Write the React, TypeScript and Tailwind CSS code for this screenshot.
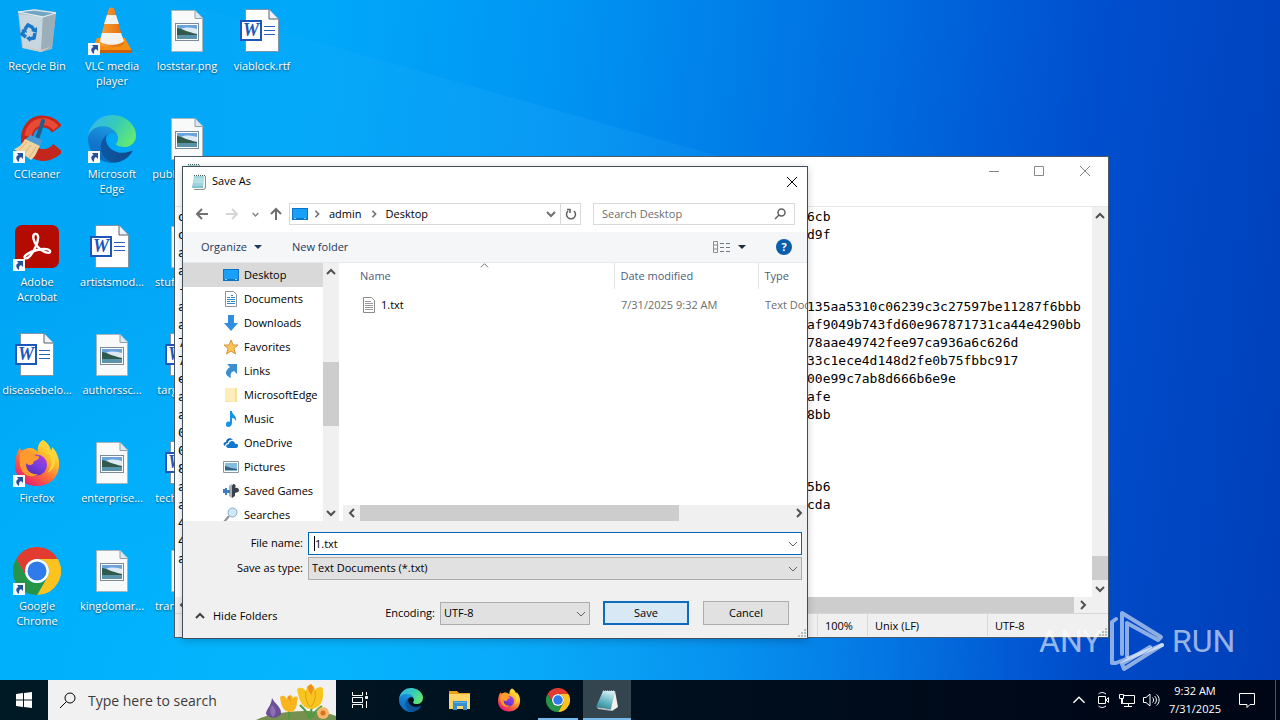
import type { ReactNode } from 'react';

type IconProps = { className?: string };

function ChromeIcon({ className }: IconProps) {
  return (
    <svg viewBox="0 0 48 48" className={className} aria-hidden="true">
      <path fill="#e23c30" d="M24 12H44.8A24 24 0 0 0 3.2 12L13.6 30A12 12 0 0 1 24 12Z" />
      <path fill="#fcc31e" d="M24 12H44.8A24 24 0 0 1 24 48L34.4 30A12 12 0 0 0 24 12Z" />
      <path fill="#269547" d="M3.2 12A24 24 0 0 0 24 48L34.4 30A12 12 0 0 1 13.6 30Z" />
      <circle cx="24" cy="24" r="12" fill="#fff" />
      <circle cx="24" cy="24" r="9.5" fill="#2f7bea" />
    </svg>
  );
}

function EdgeIcon({ className }: IconProps) {
  return (
    <svg viewBox="0 0 256 256" className={className} aria-hidden="true">
      <defs>
        <linearGradient id="edge-base" x1="0" y1="0" x2="1" y2="0">
          <stop offset="0" stopColor="#0c59a4" />
          <stop offset="1" stopColor="#114a8b" />
        </linearGradient>
        <linearGradient id="edge-side" x1="0.6" y1="0" x2="0.3" y2="1">
          <stop offset="0" stopColor="#1b9de2" />
          <stop offset="0.5" stopColor="#1478cf" />
          <stop offset="1" stopColor="#0669bc" />
        </linearGradient>
        <linearGradient id="edge-top" x1="0" y1="0.2" x2="1" y2="0.7">
          <stop offset="0" stopColor="#35b8ef" />
          <stop offset="0.5" stopColor="#36cbb6" />
          <stop offset="1" stopColor="#66eb6e" />
        </linearGradient>
      </defs>
      <path
        transform="translate(-4.6 -4.9)"
        fill="url(#edge-base)"
        d="M235.68 195.46a93.73 93.73 0 0 1-10.54 4.71 101.87 101.87 0 0 1-35.9 6.46c-47.32 0-88.54-32.55-88.54-74.32A31.48 31.48 0 0 1 117.13 105c-42.8 1.8-53.8 46.4-53.8 72.53 0 73.88 68.09 81.37 82.76 81.37 7.91 0 19.84-2.3 27-4.56l1.31-.44a128.34 128.34 0 0 0 66.6-52.8 4 4 0 0 0-5.32-5.64z"
      />
      <path
        fill="url(#edge-side)"
        d="M105.73 241.42A79.2 79.2 0 0 1 83 220.08a80.72 80.72 0 0 1 29.53-120c3.12-1.47 8.45-4.13 15.54-4a32.35 32.35 0 0 1 25.69 13 31.88 31.88 0 0 1 6.36 18.66c0-.21 24.46-79.6-80-79.6-43.9 0-80 41.66-80 78.21a130.15 130.15 0 0 0 12.11 56 128 128 0 0 0 156.38 67.11 75.55 75.55 0 0 1-62.78-8z"
      />
      <path
        fill="url(#edge-top)"
        d="M152.33 148.86c-.81 1-3.3 2.5-3.3 5.66 0 2.61 1.7 5.12 4.72 7.23 14.38 10 41.49 8.68 41.56 8.68a59.56 59.56 0 0 0 30.27-8.35 61.38 61.38 0 0 0 30.43-52.88c.26-22.41-8-37.31-11.34-43.91C223.46 23.84 177.72 0 128 0A128 128 0 0 0 0 126.2c.48-36.54 36.8-66.05 80-66.05 3.5 0 23.46.34 42 10.07 16.34 8.58 24.9 18.94 30.85 29.21 6.18 10.67 7.28 24.15 7.28 29.52s-2.74 13.33-7.8 19.91z"
      />
    </svg>
  );
}

function FirefoxIcon({ className }: IconProps) {
  return (
    <svg viewBox="0 0 48 48" className={className} aria-hidden="true">
      <defs>
        <linearGradient id="fx-body" x1="0.85" y1="0.05" x2="0.2" y2="0.95">
          <stop offset="0" stopColor="#fff14a" />
          <stop offset="0.3" stopColor="#ffbd2b" />
          <stop offset="0.6" stopColor="#ff7139" />
          <stop offset="1" stopColor="#e81873" />
        </linearGradient>
        <linearGradient id="fx-globe" x1="0.8" y1="0" x2="0.3" y2="1">
          <stop offset="0" stopColor="#b33be4" />
          <stop offset="0.5" stopColor="#7a3fe0" />
          <stop offset="1" stopColor="#5b2fb4" />
        </linearGradient>
      </defs>
      <path
        fill="url(#fx-body)"
        d="M30 1C35 4 37 8 38 12C39 10 39 9 39 8C44 13 47 20 46 28C45 39 36 47 24 47C11 47 2 38 2 26C2 19 4 14 7 8C7 10 8 11 9 12C11 10 14 9 17 9C20 9 23 11 25 13C24 8 26 3 30 1Z"
      />
      <circle cx="23.500" cy="26" r="10.500" fill="url(#fx-globe)" />
      <path fill="#ff9a2e" d="M8 12C13 10 19 12 23 17C27 17 27 19 24 21C21 22 20 23 20 25C17 27 15 26 13 24C12 31 18 36 25 35C18 41 8 35 7 26C6 20 7 16 8 12Z" />
      <path fill="#ffd43a" d="M30 1C29 8 37 13 38 21C39 26 37 31 34 34C45 29 43 17 39 12L38 12C37 8 35 4 30 1Z" />
    </svg>
  );
}

function NotepadIcon({ className }: IconProps) {
  return (
    <svg viewBox="0 0 16 16" className={className} aria-hidden="true">
      <path fill="#8b9288" d="M4 2H15V14L13 16H3Z" />
      <path fill="#f4f6ee" d="M4 2H14V13L13 15H2Z" />
      <path fill="#9fd6de" d="M3 2H13L12 14H1Z" />
      <path fill="#6fb6c4" d="M2 9H12L12 14H1Z" opacity="0.6" />
      <path stroke="#e4f5f7" strokeWidth="0.6" d="M3 5H12M3 7H12M2 9H12M2 11H12" />
      <path stroke="#4b5a58" strokeWidth="1" strokeDasharray="1 1" d="M3 1.500H14" />
    </svg>
  );
}

function TaskNotepadIcon() {
  return (
    <svg viewBox="0 0 24 24" className="size-6" aria-hidden="true">
      <defs>
        <linearGradient id="np-page" x1="0.7" y1="0" x2="0.3" y2="1">
          <stop offset="0" stopColor="#d8f1f4" />
          <stop offset="0.6" stopColor="#5fb3c0" />
          <stop offset="1" stopColor="#358497" />
        </linearGradient>
      </defs>
      <path fill="#f3f1ea" d="M20 3L23 19L17 23L15 20Z" />
      <path fill="#b8c0c0" d="M2 19L16 21L17 23L3 21Z" />
      <path fill="url(#np-page)" d="M8 3H20L16 21L1 19Z" />
      <path stroke="#dfe7e8" strokeDasharray="1 1" d="M8 3H20" />
    </svg>
  );
}

function RecycleBinIcon() {
  return (
    <svg viewBox="0 0 48 48" className="size-12" aria-hidden="true">
      <path fill="#a9bbc6" d="M5 5L21 2L43 5L39 42L28 45L9 41Z" />
      <path fill="#c8d7df" d="M6 7L30 10L28 45L10 41Z" />
      <path fill="#9caeb9" d="M30 10L43 6L39 41L28 45Z" />
      <path fill="#72a6c4" d="M6 5L21 3L42 6L30 9Z" />
      <path fill="none" stroke="#e8f3f8" d="M5 5L21 3L43 6L30 10Z" />
      <path fill="#d5c7bc" d="M10 39L28 43L39 39L28 45Z" />
      <g fill="none" stroke="#1878c9" strokeWidth="3.500">
        <path d="M12 22L15 18L19 20L21 23" />
        <path d="M22 26L21 31L16 32" />
        <path d="M13 30L9 27L11 24" />
      </g>
      <path fill="#1878c9" d="M18 24L24 20V26ZM17 29V35L13 31ZM8 23L13 21L14 26Z" />
    </svg>
  );
}

function VlcIcon() {
  return (
    <svg viewBox="0 0 48 48" className="size-12" aria-hidden="true">
      <defs>
        <linearGradient id="vlc-cone" x1="0" y1="0" x2="1" y2="0">
          <stop offset="0" stopColor="#f9a33a" />
          <stop offset="1" stopColor="#e56a05" />
        </linearGradient>
      </defs>
      <path fill="#f78d12" d="M9 31H37L44 44H3Z" />
      <path fill="#c95f08" d="M3 43H44V46H3Z" />
      <path fill="url(#vlc-cone)" d="M21 1Q23.500 0 26 1L36 36C32 42 14 42 11 36Z" />
      <path fill="#f2f1ee" d="M19 8H28L31 17H16ZM14 26H33L36 34C32 39 15 39 12 34Z" />
    </svg>
  );
}

function CCleanerIcon() {
  return (
    <svg viewBox="0 0 48 48" className="size-12" aria-hidden="true">
      <path fill="none" stroke="#c3261c" strokeWidth="12" d="M44 14C35 2 16 4 14 22C13 40 34 46 45 33" />
      <path fill="none" stroke="#e94a35" strokeWidth="7" d="M43 13C35 3 17 5 15 21" />
      <path stroke="#255c87" strokeWidth="4" strokeLinecap="round" d="M30 6L24 24" />
      <path fill="#4a9ad4" d="M17 20L30 25L26 33L12 25Z" />
      <path fill="#efd3a0" d="M12 24L27 31C23 38 23 41 18 45C12 40 5 37 1 34C7 32 9 29 12 24Z" />
      <path stroke="#d9b47a" fill="none" d="M14 27L6 35M18 30L11 39M23 32L16 43" />
    </svg>
  );
}

function AcrobatIcon() {
  return (
    <svg viewBox="0 0 48 48" className="size-12" aria-hidden="true">
      <rect x="2" y="2" width="44" height="43" rx="7" fill="#b30b00" />
      <path
        fill="none"
        stroke="#fff"
        strokeWidth="2.400"
        strokeLinejoin="round"
        d="M22 11C26 10 26 16 23 23C20 30 15 37 12 35C10 33 16 29 24 27C31 25 38 26 37 29C36 31 29 29 25 24C20 19 19 12 22 11Z"
      />
    </svg>
  );
}

function WordDocIcon() {
  return (
    <svg viewBox="0 0 48 48" className="size-12" aria-hidden="true">
      <path fill="#fff" stroke="#7e95a8" d="M7.500 2.500H31L40.500 12V44.500H7.500Z" />
      <path fill="#edf3f8" stroke="#56606a" d="M31 2.500V12H40" />
      <path stroke="#2a5fbe" d="M26 19.500H37M26 23.500H37M26 27.500H37" />
      <rect x="2" y="13" width="22" height="21" fill="#fff" />
      <path fill="#1d55b8" fillRule="evenodd" d="M2 13H24V34H2ZM4 15V32H22V15Z" />
      <text x="13" y="29" textAnchor="middle" fill="#1d55b8" className="font-['Liberation_Serif',serif] text-[18px] font-bold italic">
        W
      </text>
    </svg>
  );
}

function ImageFileIcon() {
  return (
    <svg viewBox="0 0 48 48" className="size-12" aria-hidden="true">
      <path fill="#f8f9f9" stroke="#a7b5be" d="M8.500 3.500H32L39.500 11V44.500H8.500Z" />
      <path fill="#dce7ee" stroke="#8fa1ad" d="M32 3.500V11.500H39" />
      <rect x="12.500" y="16.500" width="23" height="17" fill="#fff" stroke="#7a8a96" />
      <path fill="#6ba3dc" d="M14 18H34V25H14Z" />
      <path fill="#dcebf3" d="M18 22C24 19 30 21 34 22V27H16Z" />
      <path fill="#315a4c" d="M14 21C20 22 24 25 34 27V28H14Z" />
      <path fill="#5b93aa" d="M14 28H34V32H14Z" />
    </svg>
  );
}

function ShortcutArrow() {
  return (
    <svg viewBox="0 0 12 12" className="absolute bottom-0 left-0 size-3" aria-hidden="true">
      <rect width="12" height="12" fill="#f6f8fa" />
      <path fill="#24539b" d="M4 2H10V8L8 6C6 7 6 8 6 11C2 8 3 5 5.500 4Z" />
    </svg>
  );
}

interface DesktopItem {
  name: string;
  icon: ReactNode;
  shortcut?: boolean;
}

const desktopItems: DesktopItem[] = [
  { name: 'Recycle Bin', icon: <RecycleBinIcon /> },
  { name: 'CCleaner', icon: <CCleanerIcon />, shortcut: true },
  { name: 'Adobe Acrobat', icon: <AcrobatIcon />, shortcut: true },
  { name: 'diseasebelo...', icon: <WordDocIcon /> },
  { name: 'Firefox', icon: <FirefoxIcon className="size-12" />, shortcut: true },
  { name: 'Google Chrome', icon: <ChromeIcon className="size-12" />, shortcut: true },
  { name: 'VLC media player', icon: <VlcIcon />, shortcut: true },
  { name: 'Microsoft Edge', icon: <EdgeIcon className="size-12" />, shortcut: true },
  { name: 'artistsmod...', icon: <WordDocIcon /> },
  { name: 'authorssc...', icon: <ImageFileIcon /> },
  { name: 'enterprise...', icon: <ImageFileIcon /> },
  { name: 'kingdomar...', icon: <ImageFileIcon /> },
  { name: 'loststar.png', icon: <ImageFileIcon /> },
  { name: 'publishedfo...', icon: <ImageFileIcon /> },
  { name: 'stuffmedia...', icon: <ImageFileIcon /> },
  { name: 'targetdisc...', icon: <WordDocIcon /> },
  { name: 'techcenter...', icon: <WordDocIcon /> },
  { name: 'transferrat...', icon: <ImageFileIcon /> },
  { name: 'viablock.rtf', icon: <WordDocIcon /> },
];

function DesktopIcons() {
  return (
    <div className="relative grid w-max auto-cols-[75px] grid-flow-col grid-rows-[repeat(6,108px)]">
      {desktopItems.map((item) => (
        <button key={item.name} type="button" className="flex w-[74px] flex-col items-center gap-[3px] pt-[7px]">
          <span className="relative">
            {item.icon}
            {item.shortcut && <ShortcutArrow />}
          </span>
          <span className="w-[74px] text-center leading-[15px] text-white [text-shadow:0_1px_2px_rgb(0_0_0/0.6)]">{item.name}</span>
        </button>
      ))}
    </div>
  );
}

type Direction = 'up' | 'down' | 'left' | 'right';

const chevronPaths: Record<Direction, string> = {
  up: 'M1 7L5 3L9 7',
  down: 'M1 3L5 7L9 3',
  left: 'M7 1L3 5L7 9',
  right: 'M3 1L7 5L3 9',
};

function Chevron({ dir, className = 'size-[10px] stroke-[#505050] stroke-2' }: { dir: Direction; className?: string }) {
  return (
    <svg viewBox="0 0 10 10" fill="none" className={className} aria-hidden="true">
      <path d={chevronPaths[dir]} />
    </svg>
  );
}

function ResizeGrip() {
  return (
    <svg viewBox="0 0 10 10" className="absolute right-0 bottom-0 size-[10px]" aria-hidden="true">
      <path fill="#b3bcc0" d="M7 1h2v2H7zM4 4h2v2H4zM7 4h2v2H7zM1 7h2v2H1zM4 7h2v2H4zM7 7h2v2H7z" />
    </svg>
  );
}

// first visible character and the part of the line right of the dialog
const noteLines: [string, string][] = [
  ['o', '6cb'],
  ['o', 'd9f'],
  ['a', ''],
  ['a', ''],
  ['-', ''],
  ['a', '135aa5310c06239c3c27597be11287f6bbb'],
  ['a', 'af9049b743fd60e967871731ca44e4290bb'],
  ['7', '78aae49742fee97ca936a6c626d'],
  ['7', '33c1ece4d148d2fe0b75fbbc917'],
  ['e', '00e99c7ab8d666b6e9e'],
  ['a', 'afe'],
  ['a', '8bb'],
  ['0', ''],
  ['0', ''],
  ['8', ''],
  ['a', '5b6'],
  ['a', 'cda'],
  ['4', ''],
  ['4', ''],
  ['a', ''],
];

function NotepadWindow() {
  return (
    <section
      aria-label="Notepad"
      className="absolute top-[156px] left-[174px] flex h-[482px] w-[935px] flex-col border border-[#4b5a6b] bg-white"
    >
      <header className="flex h-[49px] items-start justify-between">
        <span className="pt-[6px] pl-[10px]">
          <NotepadIcon className="size-4" />
        </span>
        <div className="flex">
          <button type="button" aria-label="Minimize" className="flex h-7 w-[45px] items-center justify-center">
            <svg viewBox="0 0 10 10" className="size-[10px] stroke-[#888]" fill="none"><path d="M0 5.500H10" /></svg>
          </button>
          <button type="button" aria-label="Maximize" className="flex h-7 w-[45px] items-center justify-center">
            <svg viewBox="0 0 10 10" className="size-[10px] stroke-[#888]" fill="none"><path d="M.5.5H9.500V9.500H.5Z" /></svg>
          </button>
          <button type="button" aria-label="Close" className="flex h-7 w-[47px] items-center justify-center">
            <svg viewBox="0 0 10 10" className="size-[10px] stroke-[#888]" fill="none"><path d="M0 0L10 10M10 0L0 10" /></svg>
          </button>
        </div>
      </header>
      <div className="flex min-h-0 flex-1 border-t border-[#e8e8e8]">
        <div className="flex min-w-0 flex-1 flex-col">
          <div className="min-h-0 flex-1 overflow-hidden pt-px pl-[3px] font-['DejaVu_Sans_Mono',monospace] text-[13px] leading-[18px] whitespace-pre text-black">
            {noteLines.map(([head, tail], i) => (
              <div key={i} className="flex">
                <span className="w-[629px]">{head}</span>
                <span>{tail}</span>
              </div>
            ))}
          </div>
          <div className="flex h-4 items-center bg-[#f0f0f0]">
            <span className="flex w-4 justify-center"><Chevron dir="left" /></span>
            <span className="h-4 flex-1 bg-[#cdcdcd]" />
            <span className="flex w-[18px] justify-center"><Chevron dir="right" /></span>
          </div>
        </div>
        <div className="flex w-4 flex-col items-center bg-[#f0f0f0]">
          <span className="flex h-[18px] items-center"><Chevron dir="up" /></span>
          <span className="flex-1" />
          <span className="h-6 w-full bg-[#cdcdcd]" />
          <span className="mb-[15px] flex h-[18px] items-center"><Chevron dir="down" /></span>
        </div>
      </div>
      <footer className="relative flex h-6 items-stretch border-t border-[#d7d7d7] bg-[#f0f0f0] pb-px leading-6">
        <span className="flex-1" />
        <span className="w-[50px] border-l border-[#d7d7d7] pl-[7px]">100%</span>
        <span className="w-[120px] border-l border-[#d7d7d7] pl-[7px]">Unix (LF)</span>
        <span className="w-[121px] border-l border-[#d7d7d7] pl-[7px]">UTF-8</span>
        <ResizeGrip />
      </footer>
    </section>
  );
}

function DesktopFolderIcon() {
  return (
    <svg viewBox="0 0 16 16" className="size-4 shrink-0" aria-hidden="true">
      <rect x="0" y="2" width="16" height="12" fill="#0d73c5" />
      <rect x="1" y="3" width="14" height="9" fill="#18a0f8" />
      <path stroke="#8fd0fa" d="M2 12.500H4M12 12.500H14" />
    </svg>
  );
}

interface TreeItem {
  name: string;
  icon: ReactNode;
}

const treeItems: TreeItem[] = [
  {
    name: 'Desktop',
    icon: <DesktopFolderIcon />,
  },
  {
    name: 'Documents',
    icon: (
      <svg viewBox="0 0 16 16" className="size-4" aria-hidden="true">
        <path fill="#fff" stroke="#8b9298" d="M2.500.5H10.500L13.500 3.500V15.500H2.500Z" />
        <path stroke="#2f86cf" strokeWidth="1.200" d="M4 6.500H7M8 4.500H10M8 6.500H12M4 8.500H12M4 10.500H7M8 10.500H12M4 12.500H12" />
      </svg>
    ),
  },
  {
    name: 'Downloads',
    icon: (
      <svg viewBox="0 0 16 16" className="size-4" aria-hidden="true">
        <path fill="#2f8ee0" d="M5 0H11V8H15L8 16L1 8H5Z" />
      </svg>
    ),
  },
  {
    name: 'Favorites',
    icon: (
      <svg viewBox="0 0 16 16" className="size-4" aria-hidden="true">
        <path fill="#fcc55a" stroke="#d9943a" d="M8 1L10 6H15L11 9.500L12.500 15L8 12L3.500 15L5 9.500L1 6H6Z" />
      </svg>
    ),
  },
  {
    name: 'Links',
    icon: (
      <svg viewBox="0 0 16 16" className="size-4" aria-hidden="true">
        <path fill="#3a8ed2" d="M4 1H14V11L11 8C8 9 7 11 8 15C2 13 1 8 7 4Z" />
      </svg>
    ),
  },
  {
    name: 'MicrosoftEdge',
    icon: (
      <svg viewBox="0 0 16 16" className="size-4" aria-hidden="true">
        <path fill="#fdedb8" d="M2 1H13V15H2Z" />
        <path fill="#f6e09a" d="M12 1H14V15H12ZM2 14H6V15H2Z" />
      </svg>
    ),
  },
  {
    name: 'Music',
    icon: (
      <svg viewBox="0 0 16 16" className="size-4" aria-hidden="true">
        <path fill="#1295e8" d="M7 0H9C9 4 14 4 13 10C12 8 11 7 9 7V12C9 17 2 17 3 13C3 11 5 10 7 11Z" />
      </svg>
    ),
  },
  {
    name: 'OneDrive',
    icon: (
      <svg viewBox="0 0 16 16" className="size-4" aria-hidden="true">
        <path fill="#0f6dc0" d="M2 11C0 10 0 7 3 7C3 3 8 2 10 5C7 4 5 6 5 8C3 8 2 10 2 11Z" />
        <path fill="#1177cf" d="M5 13C2 12 3 9 6 9C6 5 12 5 12 9C16 8 16 13 13 13Z" />
      </svg>
    ),
  },
  {
    name: 'Pictures',
    icon: (
      <svg viewBox="0 0 16 16" className="size-4" aria-hidden="true">
        <path fill="#fff" stroke="#8c979f" d="M.5 2.500H15.500V13.500H.5Z" />
        <path fill="#84bce2" d="M2 4H14V12H2Z" />
        <path fill="#34617c" d="M2 7L8 9L14 10V11H2Z" />
      </svg>
    ),
  },
  {
    name: 'Saved Games',
    icon: (
      <svg viewBox="0 0 16 16" className="size-4" aria-hidden="true">
        <path fill="#a5b2bb" d="M6 3L9 1V15L6 13Z" />
        <path fill="#3c7cbf" d="M0 6H2V5H4V7H7V10H4V12H2V10H0Z" />
        <path fill="#39424a" d="M10 1C13 1 13 3 12 5C16 4 17 8 15 9L12 10V13L9 15V3Z" />
      </svg>
    ),
  },
  {
    name: 'Searches',
    icon: (
      <svg viewBox="0 0 16 16" className="size-4" aria-hidden="true">
        <path stroke="#8b8f94" strokeWidth="2" d="M6 9L1 15" />
        <circle cx="9.500" cy="5.500" r="4.500" fill="#cfe8fa" stroke="#84a9c6" />
      </svg>
    ),
  },
];

function AddressRow() {
  return (
    <div className="flex h-[36px] items-center pr-3 pl-3">
      <button type="button" aria-label="Back" className="w-[14px]">
        <svg viewBox="0 0 14 14" fill="none" className="size-[14px] stroke-[#707070] stroke-2" aria-hidden="true">
          <path d="M13 7H2M7 2L2 7L7 12" />
        </svg>
      </button>
      <button type="button" aria-label="Forward" className="ml-4 w-[14px]">
        <svg viewBox="0 0 14 14" fill="none" className="size-[14px] stroke-[#d5d5d5] stroke-2" aria-hidden="true">
          <path d="M1 7H12M7 2L12 7L7 12" />
        </svg>
      </button>
      <button type="button" aria-label="Recent locations" className="ml-[13px]">
        <Chevron dir="down" className="size-[7px] stroke-[#808080] stroke-2" />
      </button>
      <button type="button" aria-label="Up" className="ml-[10px]">
        <svg viewBox="0 0 14 14" fill="none" className="size-[14px] stroke-[#707070] stroke-2" aria-hidden="true">
          <path d="M7 13V2M2 7L7 2L12 7" />
        </svg>
      </button>
      <nav className="ml-[6px] flex h-[22px] flex-1 items-center border border-[#d9d9d9] pl-[2px]">
        <DesktopFolderIcon />
        <Chevron dir="right" className="ml-[5px] size-2 stroke-[#707070] stroke-2" />
        <button type="button" className="ml-2">admin</button>
        <Chevron dir="right" className="ml-2 size-2 stroke-[#707070] stroke-2" />
        <button type="button" className="ml-2">Desktop</button>
        <button type="button" aria-label="Previous locations" className="mr-1 ml-auto">
          <Chevron dir="down" className="size-[10px] stroke-[#707070] stroke-2" />
        </button>
        <button type="button" aria-label="Refresh" className="flex h-5 w-5 items-center justify-center border-l border-[#d9d9d9]">
          <svg viewBox="0 0 12 12" fill="none" className="size-3 stroke-[#606060] stroke-[1.500]" aria-hidden="true">
            <path d="M3 3A4.500 4.500 0 1 0 9 3M2 1.500H5V5" />
          </svg>
        </button>
      </nav>
      <label className="ml-3 flex h-[22px] w-[202px] items-center border border-[#d9d9d9] pr-2 pl-2">
        <input
          type="search"
          aria-label="Search Desktop"
          placeholder="Search Desktop"
          className="min-w-0 flex-1 bg-transparent outline-none placeholder:text-[#6d6d6d]"
        />
        <svg viewBox="0 0 12 12" fill="none" className="size-3 stroke-[#606060] stroke-[1.500]" aria-hidden="true">
          <circle cx="7.500" cy="4.500" r="3.500" />
          <path d="M5 7L1 11" />
        </svg>
      </label>
    </div>
  );
}

function FilePane() {
  return (
    <div className="relative flex min-w-0 flex-1 flex-col overflow-hidden">
      <Chevron dir="up" className="absolute top-[-2px] left-[137px] size-[9px] stroke-[#606060]" />
      <div className="min-h-0 flex-1 overflow-hidden">
        <table className="w-[520px] table-fixed text-left whitespace-nowrap">
          <thead className="text-[#4c607a]">
            <tr className="h-[26px]">
              <th className="w-[271px] pl-[17px] font-normal">Name</th>
              <th className="w-[144px] border-l border-[#e5e5e5] pl-[6px] font-normal">Date modified</th>
              <th className="border-l border-[#e5e5e5] pl-[6px] font-normal">Type</th>
            </tr>
          </thead>
          <tbody>
            <tr className="h-8">
              <td className="pl-[18px]">
                <span className="flex items-center gap-1">
                  <svg viewBox="0 0 16 16" className="size-4" aria-hidden="true">
                    <path fill="#fff" stroke="#8b8b8b" d="M2.500.5H10.500L13.500 3.500V15.500H2.500Z" />
                    <path stroke="#9a9a9a" d="M4 4.500H10M4 6.500H12M4 8.500H12M4 10.500H12M4 12.500H12" />
                  </svg>
                  1.txt
                </span>
              </td>
              <td className="pl-[7px] text-[#6d6d6d]">7/31/2025 9:32 AM</td>
              <td className="pl-[7px] text-[#6d6d6d]">Text Document</td>
            </tr>
          </tbody>
        </table>
      </div>
      <div className="flex h-4 items-center bg-[#f0f0f0]">
        <span className="flex w-[17px] justify-center"><Chevron dir="left" /></span>
        <span className="h-4 w-[319px] bg-[#cdcdcd]" />
        <span className="mr-[3px] ml-auto"><Chevron dir="right" /></span>
      </div>
    </div>
  );
}

const selectClass = 'w-full h-[23px] appearance-none border border-[#adadad] bg-[#e1e1e1] pl-[3px] outline-none';

function SaveAsDialog() {
  return (
    <section
      role="dialog"
      aria-label="Save As"
      className="absolute top-[166px] left-[182px] flex h-[473px] w-[626px] flex-col border border-[#3f4d5c] bg-white shadow-[0_2px_8px_rgb(0_0_0/0.2)]"
    >
      <header className="flex h-[29px] items-center pr-[9px] pl-2">
        <NotepadIcon className="size-4" />
        <h1 className="ml-[5px]">Save As</h1>
        <button type="button" aria-label="Close" className="ml-auto">
          <svg viewBox="0 0 12 12" fill="none" className="size-3 stroke-black" aria-hidden="true">
            <path d="M1 1L11 11M11 1L1 11" />
          </svg>
        </button>
      </header>
      <AddressRow />
      <div className="flex h-[31px] items-center border-b border-[#e6e8ea] bg-[#f5f6f7] pr-[15px] pl-[18px] text-[#1e395b]">
        <button type="button" className="flex w-[61px] items-center justify-between">
          Organize
          <svg viewBox="0 0 8 4" className="h-1 w-2 fill-[#1e395b]" aria-hidden="true"><path d="M0 0H8L4 4Z" /></svg>
        </button>
        <button type="button" className="ml-[30px]">New folder</button>
        <button type="button" aria-label="View options" className="ml-auto flex items-center gap-2">
          <svg viewBox="0 0 17 12" className="h-3 w-[17px]" fill="none" aria-hidden="true">
            <path stroke="#8a8f94" d="M.5.5H4.500V11.500H.5ZM.5 4H4.500M.5 8H4.500" />
            <path stroke="#6f7780" strokeDasharray="4 2" d="M7 2.500H17M7 6.500H17M7 10.500H17" />
          </svg>
          <svg viewBox="0 0 8 4" className="h-1 w-2 fill-[#1e2b3b]" aria-hidden="true"><path d="M0 0H8L4 4Z" /></svg>
        </button>
        <button
          type="button"
          aria-label="Help"
          className="ml-[30px] flex size-4 items-center justify-center rounded-full bg-[#0a5dab] font-bold text-white"
        >
          ?
        </button>
      </div>
      <div className="flex h-[258px]">
        <ul className="w-[140px] overflow-hidden">
          {treeItems.map((item, i) => (
            <li key={item.name} className={i === 0 ? 'bg-[#d9d9d9]' : ''}>
              <button type="button" className="flex h-6 items-center gap-[5px] pl-10">
                {item.icon}
                {item.name}
              </button>
            </li>
          ))}
        </ul>
        <div className="flex w-4 flex-col items-center bg-[#f0f0f0]">
          <span className="flex h-[17px] items-center"><Chevron dir="up" /></span>
          <span className="mt-[82px] h-16 w-full bg-[#cdcdcd]" />
          <span className="mt-auto flex h-[17px] items-center"><Chevron dir="down" /></span>
        </div>
        <span className="w-1" />
        <FilePane />
      </div>
      <footer className="relative flex-1 bg-[#f0f0f0] pt-[11px] pr-[5px]">
        <div className="grid grid-cols-[120px_1fr] items-center gap-x-[5px] gap-y-[2px]">
          <label htmlFor="file-name" className="text-right">File name:</label>
          <div className="relative flex">
            <input
              id="file-name"
              defaultValue="1.txt"
              className="h-[23px] w-full border border-[#0068b8] bg-white pl-[6px] outline-none"
            />
            <span className="absolute top-1 left-[6px] h-[15px] w-px bg-black" />
            <Chevron dir="down" className="absolute top-[7px] right-1 size-[10px] stroke-[#606060]" />
          </div>
          <label htmlFor="file-type" className="text-right">Save as type:</label>
          <div className="relative flex">
            <select id="file-type" className={selectClass}>
              <option>Text Documents (*.txt)</option>
            </select>
            <Chevron dir="down" className="absolute top-[7px] right-1 size-[10px] stroke-[#606060]" />
          </div>
        </div>
        <div className="flex items-center pt-[21px] pr-[13px] pl-3">
          <button type="button" className="mt-[6px] flex items-center gap-2">
            <Chevron dir="up" className="size-[10px] stroke-[#404040] stroke-2" />
            Hide Folders
          </button>
          <label htmlFor="encoding" className="mr-[5px] ml-auto">Encoding:</label>
          <div className="relative flex w-[150px]">
            <select id="encoding" className={selectClass}>
              <option>UTF-8</option>
            </select>
            <Chevron dir="down" className="absolute top-[7px] right-1 size-[10px] stroke-[#606060]" />
          </div>
          <button type="button" className="ml-[13px] h-6 w-[86px] border-2 border-[#0f6cbd] bg-[#d9e8f5]">Save</button>
          <button type="button" className="ml-[14px] h-6 w-[86px] border border-[#adadad] bg-[#e1e1e1]">Cancel</button>
        </div>
        <ResizeGrip />
      </footer>
    </section>
  );
}

function Watermark() {
  return (
    <div className="pointer-events-none absolute top-[609px] left-[1039px] flex h-16 items-center gap-2 font-['Roboto',sans-serif] text-[32px] text-white/60">
      <span className="w-[63px]">ANY</span>
      <svg viewBox="0 0 54 62" fill="none" className="h-[62px] w-[54px] stroke-white/55" strokeWidth="4" strokeLinejoin="round" strokeLinecap="round" aria-hidden="true">
        <path d="M12 44V3L51 27L48 30L17 13V46" />
        <path d="M6 9L2 12V53L6 53L52 35" />
        <path d="M52 35L14 59L12 54L40 37" />
      </svg>
      <span>RUN</span>
    </div>
  );
}

function FlowersArt() {
  return (
    <svg viewBox="0 0 80 39" className="h-[39px] w-20" aria-hidden="true">
      <path fill="#76914f" d="M0 39C18 30 58 26 80 35V39Z" />
      <path stroke="#4f9b3f" strokeWidth="2" fill="none" d="M33 38V28M54 38C54 30 57 29 55 23M44 24C50 30 52 32 53 37M66 25C60 29 57 32 56 37" />
      <path fill="#6d4f97" d="M16 17C18 22 26 26 25 33C22 38 13 38 10 33C10 28 15 26 16 17Z" />
      <path fill="#8f70b4" d="M16 24C20 28 21 32 17 36C13 32 14 28 16 24Z" />
      <path fill="#f8b51d" d="M24 16C28 13 29 16 31 18C33 12 36 14 37 17C41 14 43 16 41 20C41 28 38 31 33 31C28 30 25 26 24 16Z" />
      <path fill="#f8c51f" d="M41 8C46 5 48 8 50 10C52 1 57 2 59 9C64 4 68 6 67 11C68 20 64 28 54 28C45 26 43 18 41 8Z" />
      <path fill="#ef8e1b" d="M51 6L55 3L58 7L55 14ZM31 16L34 15L35 21Z" />
      <path stroke="#e59a18" fill="none" d="M50 10C49 17 51 22 54 26M59 10C60 17 58 22 55 26" />
      <circle cx="67" cy="32" r="6" fill="#f6b76b" />
      <circle cx="67" cy="32" r="2.500" fill="#d8701e" />
    </svg>
  );
}

function Taskbar() {
  return (
    <footer className="flex h-10 items-stretch bg-linear-to-r from-[#001a25] to-[#000616] text-white">
      <button type="button" aria-label="Start" className="flex w-12 items-center justify-center">
        <svg viewBox="0 0 16 16" className="size-4 fill-white" aria-hidden="true">
          <path d="M0 2L7 1V7.500H0ZM8 1L16 0V7.500H8ZM0 8.500H7V15L0 14ZM8 8.500H16V16L8 15Z" />
        </svg>
      </button>
      <label className="flex w-72 items-center bg-[#f1f1f1] pl-3">
        <svg viewBox="0 0 16 16" fill="none" className="size-4 stroke-black" aria-hidden="true">
          <circle cx="10" cy="6" r="5" />
          <path d="M6.500 9.500L0 16" />
        </svg>
        <input
          type="search"
          aria-label="Type here to search"
          placeholder="Type here to search"
          className="ml-3 min-w-0 flex-1 bg-transparent text-[14px] outline-none placeholder:text-[#3c3c3c]"
        />
        <FlowersArt />
      </label>
      <button type="button" aria-label="Task View" className="flex w-12 items-center justify-center">
        <svg viewBox="0 0 16 16" fill="none" className="size-4 stroke-white" aria-hidden="true">
          <path d="M.5 0V3.500H10.500V0M.5 16V12.500H10.500V16M.5 5.500H10.500V10.500H.5ZM14.500 0V3M14.500 9V16" />
          <path fill="#fff" d="M13.500 4.500H15.500V6.500H13.500Z" />
        </svg>
      </button>
      <div className="ml-[3px] flex gap-px">
        <button type="button" aria-label="Microsoft Edge" className="flex w-12 items-center justify-center">
          <EdgeIcon className="size-6" />
        </button>
        <button type="button" aria-label="File Explorer" className="flex w-12 items-center justify-center">
          <svg viewBox="0 0 24 24" className="size-6" aria-hidden="true">
            <path fill="#e8a019" d="M1 3H9L11 5H22V8H1Z" />
            <path fill="#fcd468" d="M1 6H22V21H1Z" />
            <path fill="#3691d1" d="M5 13H19V22H15V18H9V22H5Z" />
            <path fill="#66b5e9" d="M6 14H18V15H6Z" />
          </svg>
        </button>
        <button type="button" aria-label="Firefox" className="flex w-12 items-center justify-center">
          <FirefoxIcon className="size-6" />
        </button>
        <button type="button" aria-label="Google Chrome" className="relative flex w-12 items-center justify-center">
          <ChromeIcon className="size-6" />
          <span className="absolute inset-x-1 bottom-0 h-[2px] bg-[#76b9ed]" />
        </button>
        <button type="button" aria-label="Notepad" className="relative flex w-12 items-center justify-center bg-[#35454f]">
          <TaskNotepadIcon />
          <span className="absolute inset-x-0 bottom-0 h-[2px] bg-[#76b9ed]" />
        </button>
      </div>
      <div className="ml-auto flex items-center">
        <button type="button" aria-label="Show hidden icons" className="flex w-6 justify-center">
          <Chevron dir="up" className="size-[14px] stroke-white" />
        </button>
        <button type="button" aria-label="Meet Now" className="flex w-6 justify-center">
          <svg viewBox="0 0 16 16" fill="none" className="size-4 stroke-white" aria-hidden="true">
            <path d="M3.500 4.500H10.500V11.500H3.500ZM11 8L13.500 5.500V10.500L11 8M3.500 2C6 0 8 0 11 2M3.500 14C6 16 8 16 11 14" />
          </svg>
        </button>
        <button type="button" aria-label="Network" className="flex w-6 justify-center">
          <svg viewBox="0 0 16 16" fill="none" className="size-4 stroke-white" aria-hidden="true">
            <path d="M5 3.500H15.500V11.500H3.500V7M.5 2.500H4.500V6.500H.5ZM9.500 12V14.500M5 14.500H13M2.500 7V12" />
          </svg>
        </button>
        <button type="button" aria-label="Volume" className="flex w-6 justify-center">
          <svg viewBox="0 0 18 16" fill="none" className="h-4 w-[18px] stroke-white" aria-hidden="true">
            <path d="M1.500 5.500H4L8 2V14L4 10.500H1.500ZM10.500 5.500C12 7 12 9 10.500 10.500M12.500 4C15 6 15 10 12.500 12M14.500 2.500C18 5 18 11 14.500 13.500" />
          </svg>
        </button>
        <button type="button" className="w-16 text-center leading-[18px] whitespace-nowrap">
          9:32 AM
          <br />
          7/31/2025
        </button>
        <button type="button" aria-label="Notifications" className="ml-2 flex w-6 justify-center">
          <svg viewBox="0 0 16 16" fill="none" className="size-4 stroke-white" aria-hidden="true">
            <path d="M.5 1.500H15.500V12.500H11L8 15.500V12.500H.5Z" />
          </svg>
        </button>
        <span className="ml-4 h-10 w-[5px] border-l border-[#4a5560]" />
      </div>
    </footer>
  );
}

function Wallpaper() {
  return (
    <svg viewBox="0 0 1280 680" preserveAspectRatio="none" className="absolute inset-0 size-full" aria-hidden="true">
      <defs>
        <linearGradient id="ray" x1="0" y1="0" x2="1" y2="0">
          <stop offset="0" stopColor="#38b6ff" stopOpacity="0" />
          <stop offset="0.5" stopColor="#38b6ff" stopOpacity="0.16" />
          <stop offset="1" stopColor="#38b6ff" stopOpacity="0" />
        </linearGradient>
        <radialGradient id="glow" cx="0.25" cy="1" r="0.6">
          <stop offset="0" stopColor="#00bcff" stopOpacity="0.7" />
          <stop offset="1" stopColor="#00bcff" stopOpacity="0" />
        </radialGradient>
      </defs>
      <path fill="url(#glow)" d="M0 0H1280V680H0Z" />
      <path fill="url(#ray)" d="M170 0L1100 265V680H0V0Z" />
    </svg>
  );
}

export default function App() {
  return (
    <div className="flex h-screen flex-col overflow-hidden font-['Open_Sans',sans-serif] text-[11px] text-black select-none">
      <main className="relative min-h-0 flex-1 overflow-hidden bg-[linear-gradient(97deg,#00a6f5_0%,#00a8fa_24%,#0094f2_42%,#0075e4_60%,#0050d0_80%,#003eb8_100%)]">
        <Wallpaper />
        <DesktopIcons />
        <NotepadWindow />
        <SaveAsDialog />
        <Watermark />
      </main>
      <Taskbar />
    </div>
  );
}
